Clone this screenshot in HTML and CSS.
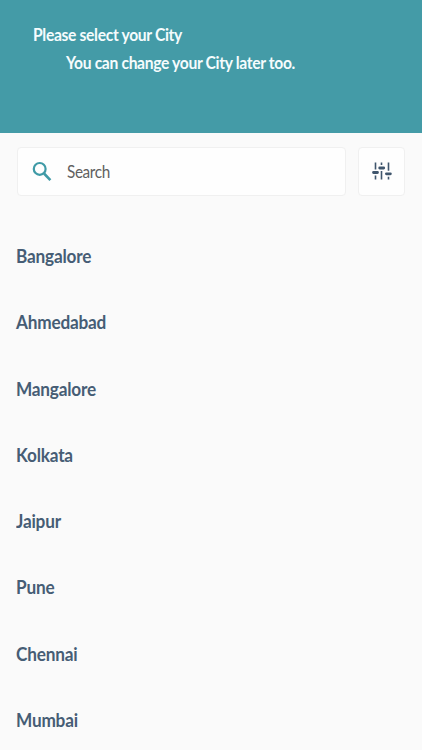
FILE: index.html
```html
<!DOCTYPE html>
<html lang="en">
<head>
<meta charset="utf-8">
<title>Select City</title>
<link rel="stylesheet" href="styles.css">
</head>
<body>
<header class="header">
  <div class="title">Please select your City</div>
  <div class="subtitle">You can change your City later too.</div>
</header>
<main>
  <div class="tools">
    <label class="search">
      <svg class="search-icon" viewBox="0 0 20 21" width="20" height="21" fill="none" stroke="#3f9aa6"><circle cx="7.7" cy="7.9" r="5.9" stroke-width="2.2"/><path d="M12 12.5L18.4 19.2" stroke-width="2.6"/></svg>
      <span class="placeholder">Search</span>
    </label>
    <button class="filter" aria-label="Filter">
      <svg viewBox="0 0 20 18" width="20" height="18" fill="none" stroke="#40566d"><path d="M3.5 .5V7.5M3.5 13.5V17.5M9.5 .5V3M9.5 9V17.5M16.5 .5V8.7M16.5 14.8V17.5" stroke-width="1.6"/><path d="M1.5 10.5H5.5M7.7 6H11.7M14.4 11.8H18.4" stroke-width="2.8" stroke-linecap="round"/></svg>
    </button>
  </div>
  <ul class="cities">
    <li>Bangalore</li>
    <li>Ahmedabad</li>
    <li>Mangalore</li>
    <li>Kolkata</li>
    <li>Jaipur</li>
    <li>Pune</li>
    <li>Chennai</li>
    <li>Mumbai</li>
  </ul>
</main>
</body>
</html>
```
FILE: styles.css
```css
* { box-sizing: border-box; }
body {
  margin: 0;
  height: 750px;
  overflow: hidden;
  background: #fafafa;
  font-family: Lato, "Liberation Sans", sans-serif;
}
.header {
  height: 133px;
  padding: 21px 0 0 33px;
  background: #449ba7;
  color: #f5fcfd;
  font-size: 16.5px;
  font-weight: 700;
  line-height: 28px;
  white-space: nowrap;
}
.title, .subtitle {
  width: max-content;
  letter-spacing: -0.35px;
  transform: scaleX(0.948);
  transform-origin: left;
}
.subtitle { margin-left: 33px; }
.tools {
  display: flex;
  gap: 12px;
  padding: 14px 17px 0 16.5px;
}
.search, .filter {
  height: 49px;
  background: #fefefe;
  border: 1px solid #f0f0f0;
  border-radius: 4px;
}
.search {
  flex: 1;
  display: flex;
  align-items: center;
  padding-left: 14px;
}
.placeholder {
  margin-left: 15px;
  color: #606060;
  font-size: 17px;
  letter-spacing: -0.4px;
  transform: scaleX(0.9);
  transform-origin: left;
}
.filter {
  width: 47px;
  padding: 0 0 2px;
  display: flex;
  align-items: center;
  justify-content: center;
}
.cities {
  list-style: none;
  margin: 27.1px 0 0;
  padding: 0 16.4px;
  color: #465d75;
  font-size: 18px;
  font-weight: 700;
  letter-spacing: -0.2px;
}
.cities li {
  width: max-content;
  height: 66.25px;
  line-height: 66.25px;
  transform: scaleX(0.955);
  transform-origin: left;
}
```
